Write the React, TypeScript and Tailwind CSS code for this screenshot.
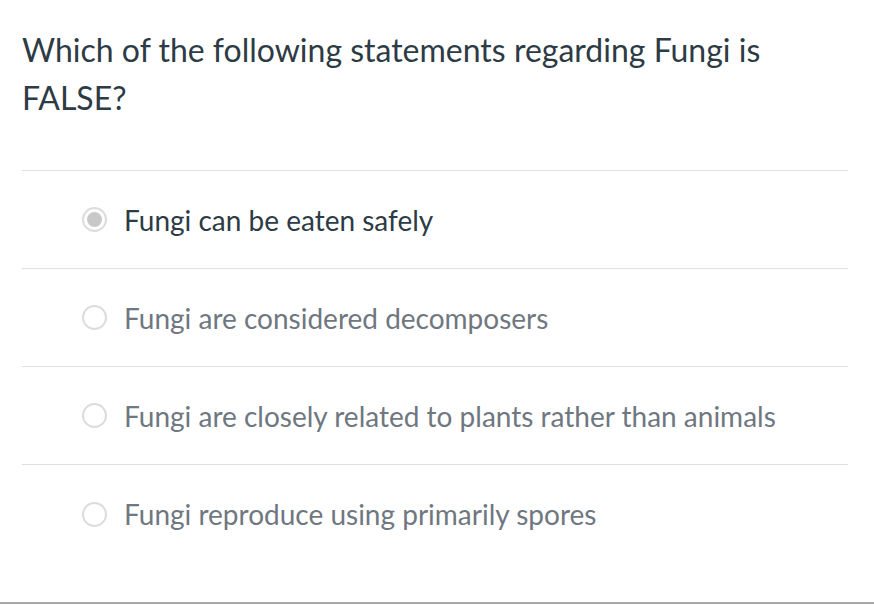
import React from "react";

const options = [
  { text: "Fungi can be eaten safely", selected: true },
  { text: "Fungi are considered decomposers", selected: false },
  { text: "Fungi are closely related to plants rather than animals", selected: false },
  { text: "Fungi reproduce using primarily spores", selected: false },
];

export default function App() {
  return (
    <div
      className="w-[874px] h-[612px] bg-white flex flex-col"
      style={{ fontFamily: "Lato, 'Open Sans', sans-serif" }}
    >
      <div className="px-[22px] pt-[26px] w-[874px]">
        <p className="text-[32px] leading-[48px] text-[#2d3b45] w-[800px]">
          Which of the following statements regarding Fungi is FALSE?
        </p>
      </div>
      <div className="mx-[22px] mt-[48px] w-[826px] border-t border-[#e0e0e0]">
        {options.map((o, i) => (
          <div
            key={i}
            className={`h-[98px] flex items-center pl-[60px] ${i < options.length - 1 ? "border-b border-[#e0e0e0]" : ""}`}
          >
            <span className="w-[25px] h-[25px] rounded-full border-2 border-[#dcdcdc] bg-white flex items-center justify-center shrink-0">
              {o.selected && <span className="w-[15px] h-[15px] rounded-full bg-[#c8c8c8]" />}
            </span>
            <span
              className={`ml-[17px] text-[28px] ${o.selected ? "text-[#2d3b45]" : "text-[#6f7780]"}`}
            >
              {o.text}
            </span>
          </div>
        ))}
      </div>
      <div className="flex-1" />
      <div className="h-[2px] bg-[#a8a8a8] mb-[8px]" />
    </div>
  );
}
